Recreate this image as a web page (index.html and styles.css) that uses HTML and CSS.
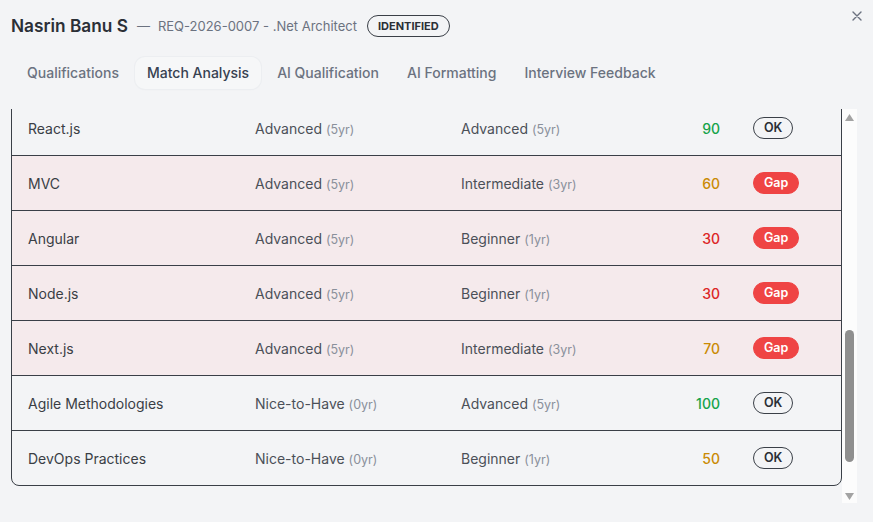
FILE: index.html
```html
<!DOCTYPE html>
<html lang="en">
<head>
<meta charset="utf-8">
<title>Nasrin Banu S — Match Analysis</title>
<link rel="stylesheet" href="styles.css">
</head>
<body>
<div class="modal">
  <button class="close" aria-label="Close">
    <svg width="10" height="10" viewBox="0 0 10 10"><path d="M1 1L9 9M9 1L1 9" stroke="#6b7280" stroke-width="1.4" stroke-linecap="round"/></svg>
  </button>
  <header class="head">
    <h1 class="name">Nasrin Banu S</h1>
    <span class="sub"><span class="dash">—</span>REQ-2026-0007 - .Net Architect</span>
    <span class="state">IDENTIFIED</span>
  </header>
  <nav class="tabs">
    <span class="tab">Qualifications</span>
    <span class="tab active">Match Analysis</span>
    <span class="tab">AI Qualification</span>
    <span class="tab">AI Formatting</span>
    <span class="tab">Interview Feedback</span>
  </nav>
  <div class="viewport">
    <div class="body" id="scroller">
      <div class="summary">
        <span class="sum-label">Overall Match</span>
        <span class="sum-value">62%</span>
      </div>
      <div class="table">
        <div class="row thead">
          <span>Skill</span><span>Required</span><span>Candidate</span><span class="score">Score</span><span class="status">Status</span>
        </div>
        <div class="row"><span class="skill">C#</span><span class="lvl">Expert <small>(8yr)</small></span><span class="lvl">Expert <small>(8yr)</small></span><span class="score good">100</span><span class="status"><b class="ok">OK</b></span></div>
        <div class="row"><span class="skill">ASP.NET Core</span><span class="lvl">Expert <small>(6yr)</small></span><span class="lvl">Advanced <small>(5yr)</small></span><span class="score good">85</span><span class="status"><b class="ok">OK</b></span></div>
        <div class="row"><span class="skill">.NET Framework</span><span class="lvl">Advanced <small>(5yr)</small></span><span class="lvl">Expert <small>(7yr)</small></span><span class="score good">100</span><span class="status"><b class="ok">OK</b></span></div>
        <div class="row"><span class="skill">Entity Framework</span><span class="lvl">Advanced <small>(5yr)</small></span><span class="lvl">Advanced <small>(5yr)</small></span><span class="score good">90</span><span class="status"><b class="ok">OK</b></span></div>
        <div class="row"><span class="skill">SQL Server</span><span class="lvl">Advanced <small>(5yr)</small></span><span class="lvl">Advanced <small>(6yr)</small></span><span class="score good">95</span><span class="status"><b class="ok">OK</b></span></div>
        <div class="row"><span class="skill">Web API</span><span class="lvl">Advanced <small>(5yr)</small></span><span class="lvl">Advanced <small>(5yr)</small></span><span class="score good">90</span><span class="status"><b class="ok">OK</b></span></div>
        <div class="row gap"><span class="skill">Microservices</span><span class="lvl">Advanced <small>(5yr)</small></span><span class="lvl">Intermediate <small>(3yr)</small></span><span class="score mid">60</span><span class="status"><b class="bad">Gap</b></span></div>
        <div class="row"><span class="skill">Azure</span><span class="lvl">Advanced <small>(4yr)</small></span><span class="lvl">Advanced <small>(4yr)</small></span><span class="score good">90</span><span class="status"><b class="ok">OK</b></span></div>
        <div class="row"><span class="skill">JavaScript</span><span class="lvl">Advanced <small>(5yr)</small></span><span class="lvl">Advanced <small>(6yr)</small></span><span class="score good">95</span><span class="status"><b class="ok">OK</b></span></div>
        <div class="row"><span class="skill">React.js</span><span class="lvl">Advanced <small>(5yr)</small></span><span class="lvl">Advanced <small>(5yr)</small></span><span class="score good">90</span><span class="status"><b class="ok">OK</b></span></div>
        <div class="row gap"><span class="skill">MVC</span><span class="lvl">Advanced <small>(5yr)</small></span><span class="lvl">Intermediate <small>(3yr)</small></span><span class="score mid">60</span><span class="status"><b class="bad">Gap</b></span></div>
        <div class="row gap"><span class="skill">Angular</span><span class="lvl">Advanced <small>(5yr)</small></span><span class="lvl">Beginner <small>(1yr)</small></span><span class="score low">30</span><span class="status"><b class="bad">Gap</b></span></div>
        <div class="row gap"><span class="skill">Node.js</span><span class="lvl">Advanced <small>(5yr)</small></span><span class="lvl">Beginner <small>(1yr)</small></span><span class="score low">30</span><span class="status"><b class="bad">Gap</b></span></div>
        <div class="row gap"><span class="skill">Next.js</span><span class="lvl">Advanced <small>(5yr)</small></span><span class="lvl">Intermediate <small>(3yr)</small></span><span class="score mid">70</span><span class="status"><b class="bad">Gap</b></span></div>
        <div class="row"><span class="skill">Agile Methodologies</span><span class="lvl">Nice-to-Have <small>(0yr)</small></span><span class="lvl">Advanced <small>(5yr)</small></span><span class="score good">100</span><span class="status"><b class="ok">OK</b></span></div>
        <div class="row"><span class="skill">DevOps Practices</span><span class="lvl">Nice-to-Have <small>(0yr)</small></span><span class="lvl">Beginner <small>(1yr)</small></span><span class="score mid">50</span><span class="status"><b class="ok">OK</b></span></div>
      </div>
      <p class="note">Scores compare the candidate's experience level against each requirement. Rows marked Gap fall below the required level.</p>
    </div>
    <div class="scrollbar" aria-hidden="true">
      <span class="arrow"><svg width="15" height="15" viewBox="0 0 15 15"><path d="M3 12L7.5 5L12 12Z" fill="#a3a3a3"/></svg></span>
      <span class="track"><span class="thumb"></span></span>
      <span class="arrow"><svg width="15" height="15" viewBox="0 0 15 15"><path d="M3 5L12 5L7.5 12Z" fill="#a3a3a3"/></svg></span>
    </div>
  </div>
</div>
<script src="script.js"></script>
</body>
</html>
```

FILE: styles.css
```css
* { box-sizing: border-box; }
html, body { margin: 0; padding: 0; }
body {
  background: #f3f4f6;
  font-family: Inter, "Noto Sans", sans-serif;
  color: #374151;
}
.modal {
  position: relative;
  height: 522px;
  display: flex;
  flex-direction: column;
  padding: 15px 16px 19px 11px;
}
.close {
  position: absolute;
  top: 10px;
  right: 10px;
  width: 12px;
  height: 12px;
  padding: 0;
  border: 0;
  background: none;
  display: flex;
  align-items: center;
  justify-content: center;
}
.head {
  display: flex;
  align-items: center;
  height: 22px;
}
.name {
  margin: 0;
  font-size: 17.25px;
  font-weight: 600;
  color: #2b2f36;
  line-height: 22px;
}
.sub {
  margin-left: 9px;
  font-size: 13px;
  color: #6b7280;
}
.dash { margin-right: 8px; }
.state {
  margin-left: 10px;
  height: 22px;
  padding: 0 10px;
  border: 1px solid #3a3f47;
  border-radius: 11px;
  font-size: 11px;
  font-weight: 700;
  line-height: 20px;
  color: #2b2f36;
}
.tabs {
  display: flex;
  gap: 4px;
  margin-top: 20px;
  padding-left: 4px;
}
.tab {
  padding: 6px 12px;
  border-radius: 10px;
  font-size: 14px;
  font-weight: 500;
  line-height: 20px;
  color: #6b7280;
}
.tab.active {
  color: #374151;
  background: #f6f7f8;
  box-shadow: 0 0 0 1px #eceef1, 0 1px 2px rgba(0, 0, 0, 0.03);
}
.viewport {
  flex: 1;
  min-height: 0;
  margin-top: 20px;
  display: flex;
}
.body {
  flex: 1;
  overflow-y: auto;
}
.scrollbar {
  width: 15px;
  display: flex;
  flex-direction: column;
  background: #fcfcfc;
}
.arrow {
  height: 15px;
  display: block;
}
.arrow svg { display: block; }
.track {
  flex: 1;
  display: block;
  padding-top: 206px;
}
.thumb {
  display: block;
  width: 9px;
  height: 132px;
  margin: 0 auto;
  border-radius: 4.5px;
  background: #8f8f8f;
}
.summary {
  height: 51px;
  margin-bottom: 16px;
  padding: 0 16px;
  display: flex;
  align-items: center;
  justify-content: space-between;
  border: 1px solid #d1d5db;
  border-radius: 8px;
  font-size: 14px;
}
.sum-value { font-weight: 600; color: #ca8a04; }
.table {
  border: 1px solid #3a3f47;
  border-radius: 8px;
  overflow: hidden;
}
.row {
  display: grid;
  grid-template-columns: 227px 206px 1fr 60px 88px;
  align-items: center;
  height: 55px;
  padding: 0 33px 0 16px;
  border-top: 1px solid #3a3f47;
  font-size: 14px;
}
.row.thead {
  height: 44px;
  border-top: 0;
  font-size: 12px;
  font-weight: 600;
  color: #6b7280;
  text-transform: uppercase;
}
.row.gap { background: #f5eaec; }
.skill { color: #3a3e45; }
.lvl { color: #4b5058; }
.lvl small { font-size: 12.5px; color: #8a909b; }
.score { text-align: right; font-weight: 500; }
.good { color: #16a34a; }
.mid { color: #ca8a04; }
.low { color: #dc2626; }
.status { padding-left: 33px; }
.status b {
  display: inline-block;
  height: 22px;
  padding: 0 10px;
  border-radius: 11px;
  font-size: 12.5px;
  font-weight: 600;
  line-height: 20px;
}
.ok { border: 1px solid #3a3f47; color: #2b2f36; }
.bad { border: 1px solid #ef4444; background: #ef4444; color: #fff; }
.note {
  margin: 30px 0 0;
  height: 63px;
  font-size: 12px;
  color: #6b7280;
}
```

FILE: script.js
```js
document.getElementById('scroller').scrollTop = 616;
```
